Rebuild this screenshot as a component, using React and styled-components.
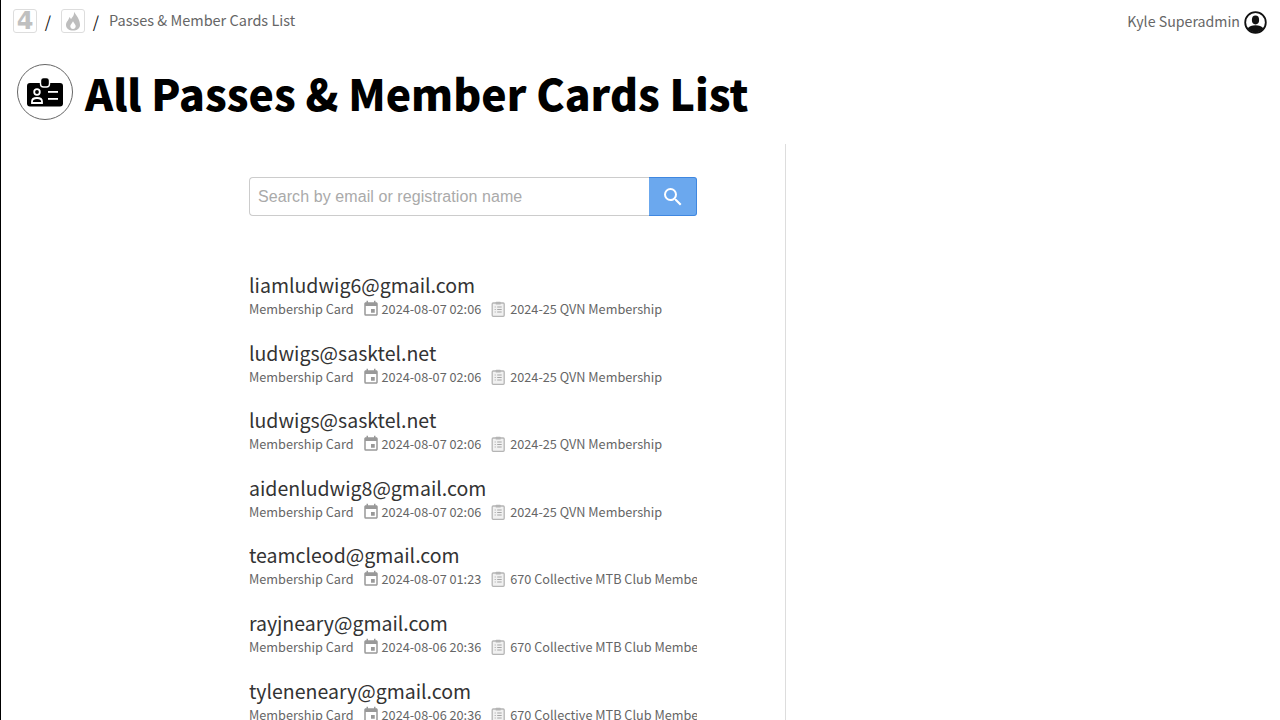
import React from "react";
import styled, { createGlobalStyle } from "styled-components";
import { MdSearch, MdEvent } from "react-icons/md";

const GlobalStyle = createGlobalStyle`
  html, body {
    margin: 0;
    height: 720px;
    overflow: hidden;
    background: #fff;
  }
  body {
    font-family: "Noto Sans CJK SC", "Noto Sans", sans-serif;
    color: #222;
  }
`;

const registrations = [
  { email: "liamludwig6@gmail.com", date: "2024-08-07 02:06", name: "2024-25 QVN Membership" },
  { email: "ludwigs@sasktel.net", date: "2024-08-07 02:06", name: "2024-25 QVN Membership" },
  { email: "ludwigs@sasktel.net", date: "2024-08-07 02:06", name: "2024-25 QVN Membership" },
  { email: "aidenludwig8@gmail.com", date: "2024-08-07 02:06", name: "2024-25 QVN Membership" },
  { email: "teamcleod@gmail.com", date: "2024-08-07 01:23", name: "670 Collective MTB Club Membership" },
  { email: "rayjneary@gmail.com", date: "2024-08-06 20:36", name: "670 Collective MTB Club Membership" },
  { email: "tyleneneary@gmail.com", date: "2024-08-06 20:36", name: "670 Collective MTB Club Membership" },
];

const App = () => {
  return (
    <>
      <GlobalStyle />
      <Page>
        <TopBar>
          <Crumbs>
            <CrumbBox><FourMark>4</FourMark></CrumbBox>
            <Slash>/</Slash>
            <CrumbBox>
              <svg width="18" height="20" viewBox="0 0 18 20">
                <path
                  fillRule="evenodd"
                  d="M10 .8c.5 3.500-1.500 5-3 7.500-.3-1-.8-1.800-1.600-2.400C5 9 2 10.500 2 14c0 3.500 3 5.500 7 5.500s7-2 7-5.500C16 9 12.500 4.500 10 .8zM9 18c-1.500 0-2.700-1.100-2.700-2.700 0-1.800 1.700-2.800 2.700-5 1.100 2.200 2.700 3.200 2.700 5 0 1.600-1.200 2.700-2.700 2.700z"
                  fill="#bebebe"
                />
              </svg>
            </CrumbBox>
            <Slash>/</Slash>
            <CrumbText>Passes &amp; Member Cards List</CrumbText>
          </Crumbs>
          <UserBlock>
            <UserName>Kyle Superadmin</UserName>
            <svg width="23" height="23" viewBox="0 0 23 23">
              <circle cx="11.500" cy="11.500" r="10.300" fill="#fff" stroke="#111" strokeWidth="1.800" />
              <ellipse cx="11.500" cy="9" rx="3.600" ry="4.400" fill="#111" />
              <path d="M3.500 17.500c1.800-2.300 4.500-3.300 8-3.300s6.200 1 8 3.300c-1.800 2.300-4.800 3.800-8 3.800s-6.200-1.500-8-3.800z" fill="#111" />
            </svg>
          </UserBlock>
        </TopBar>

        <TitleRow>
          <TitleBadge>
            <svg width="36" height="30" viewBox="0 0 36 30">
              <path
                d="M3 6h30a3 3 0 0 1 3 3v17.500a3 3 0 0 1-3 3H3a3 3 0 0 1-3-3V9a3 3 0 0 1 3-3z"
                fill="#000"
              />
              <rect x="13.500" y="0.500" width="9" height="9.500" rx="3" fill="#000" stroke="#fff" strokeWidth="1.400" />
              <circle cx="10" cy="15" r="2.800" fill="none" stroke="#fff" strokeWidth="1.800" />
              <path d="M5 26v-1.500c0-2.300 2.300-3.500 5-3.500s5 1.200 5 3.500V26z" fill="none" stroke="#fff" strokeWidth="1.800" />
              <rect x="21" y="14" width="10" height="1.800" fill="#fff" />
              <rect x="21" y="21" width="10" height="1.800" fill="#fff" />
            </svg>
          </TitleBadge>
          <Title>All Passes &amp; Member Cards List</Title>
        </TitleRow>

        <Main>
          <ListColumn>
            <SearchForm>
              <SearchInput placeholder="Search by email or registration name" />
              <SearchButton type="button">
                <MdSearch size={24} color="#fff" />
              </SearchButton>
            </SearchForm>
            <List>
              {registrations.map((item, index) => (
                <Row key={`${index}${item.email}`}>
                  <Email>{item.email}</Email>
                  <Meta>
                    <MetaItem>Membership Card</MetaItem>
                    <MetaItem>
                      <MdEvent size={18} color="#999" />
                      {item.date}
                    </MetaItem>
                    <MetaItem>
                      <svg width="19" height="16" viewBox="0 0 19 16">
                        <rect x="3.200" y="2" width="12" height="13.300" rx="1" fill="#f1f1f1" stroke="#b5b5b5" strokeWidth="1.300" />
                        <rect x="6.700" y="0.700" width="5" height="2.800" rx=".6" fill="#b5b5b5" />
                        <path d="M5.700 6h1M8.200 6h4.500M5.700 8.500h1M8.200 8.500h4.500M5.700 11h1M8.200 11h4.500" stroke="#a5a5a5" strokeWidth="1" />
                      </svg>
                      {item.name}
                    </MetaItem>
                  </Meta>
                </Row>
              ))}
            </List>
          </ListColumn>
        </Main>
      </Page>
    </>
  );
};

export default App;

const Page = styled.div`
  height: 720px;
  overflow: hidden;
  border-left: 1px solid #000;
  display: flex;
  flex-direction: column;
`;

const TopBar = styled.div`
  display: flex;
  justify-content: space-between;
  align-items: flex-start;
  padding: 9px 13px 0 12px;
  height: 33px;
`;

const Crumbs = styled.div`
  display: flex;
  align-items: center;
  height: 24px;
`;

const CrumbBox = styled.div`
  width: 22px;
  height: 22px;
  border: 1px solid #ddd;
  border-radius: 3px;
  display: flex;
  align-items: center;
  justify-content: center;
`;

const FourMark = styled.span`
  font-family: "DejaVu Sans", sans-serif;
  font-weight: 700;
  font-size: 24px;
  line-height: 22px;
  color: #c0c0c0;
`;

const Slash = styled.span`
  width: 24px;
  padding-right: 2px;
  box-sizing: border-box;
  text-align: center;
  font-size: 16px;
  color: #111;
`;

const CrumbText = styled.span`
  font-size: 14.5px;
  line-height: 22px;
  color: #666;
  margin-bottom: 2px;
`;

const UserBlock = styled.div`
  display: flex;
  align-items: center;
  gap: 4px;
  height: 26px;
  font-size: 14.2px;
  color: #666;
`;

const UserName = styled.span`
  margin-bottom: 2px;
`;

const TitleRow = styled.div`
  display: flex;
  align-items: center;
  gap: 12px;
  padding-left: 16px;
  height: 100px;
  margin-bottom: 2px;
`;

const TitleBadge = styled.div`
  width: 56px;
  height: 56px;
  box-sizing: border-box;
  border: 1px solid #666;
  border-radius: 50%;
  display: flex;
  align-items: center;
  justify-content: center;
`;

const Title = styled.h1`
  margin: 0;
  font-size: 42.7px;
  font-weight: 900;
  line-height: 60px;
  color: #000;
`;

const Main = styled.div`
  flex: 1;
  display: flex;
  min-height: 0;
`;

const ListColumn = styled.div`
  border-right: 1px solid #ddd;
  padding: 33px 0 0 248px;
  width: 536px;
`;

const SearchForm = styled.form`
  display: flex;
  width: 448px;
  height: 39px;
`;

const SearchInput = styled.input`
  flex: 1;
  min-width: 0;
  box-sizing: border-box;
  border: 1px solid #ccc;
  border-right: none;
  border-radius: 4px 0 0 4px;
  padding: 0 8px;
  font-family: "Liberation Sans", sans-serif;
  font-size: 16px;
  letter-spacing: 0.08px;
  outline: none;

  &::placeholder {
    color: #aaa;
    opacity: 1;
  }
`;

const SearchButton = styled.button`
  width: 48px;
  padding: 0;
  box-sizing: border-box;
  border: 1px solid #3f87e0;
  border-left: none;
  border-radius: 0 3px 3px 0;
  background: #6ba8ee;
  display: flex;
  align-items: center;
  justify-content: center;
`;

const List = styled.div`
  margin-top: 55px;
  width: 448px;
  display: flex;
  flex-direction: column;
`;

const Row = styled.div`
  height: 67.6px;
  overflow: hidden;
`;

const Email = styled.div`
  font-size: 19.5px;
  line-height: 27px;
  color: #333;
`;

const Meta = styled.div`
  display: flex;
  gap: 8px;
  height: 22px;
  font-size: 12.7px;
  line-height: 22px;
  color: #666;
  white-space: nowrap;
  overflow: hidden;
`;

const MetaItem = styled.span`
  display: inline-flex;
  align-items: center;
  gap: 2px;
  flex-shrink: 0;
`;
